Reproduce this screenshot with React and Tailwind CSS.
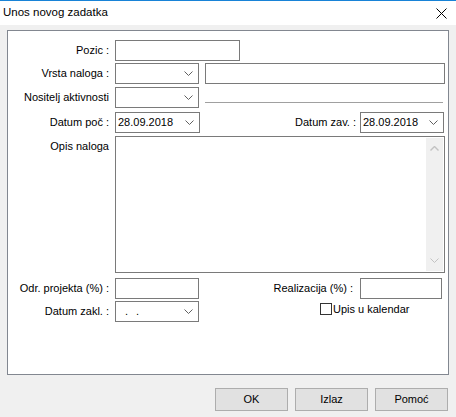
import React from "react";

function Chevron({ color = "#606060" }) {
  return (
    <svg width="9" height="5" viewBox="0 0 9 5" className="shrink-0">
      <path d="M0.5 0.5 L4.5 4.5 L8.5 0.5" fill="none" stroke={color} strokeWidth="1" />
    </svg>
  );
}

function Label({ children, className = "" }) {
  return <div className={`w-[101px] shrink-0 text-right ${className}`}>{children}</div>;
}

function Input({ w, className = "" }) {
  return <div className={`h-[21px] border border-[#7a7a7a] bg-white shrink-0 ${w} ${className}`} />;
}

function Combo({ value, w = "w-[84px]", className = "", children }) {
  return (
    <div className={`h-[21px] ${w} border border-[#7a7a7a] bg-white shrink-0 flex items-center justify-between pl-[2px] pr-[5px] ${className}`}>
      <span className="whitespace-pre">{children ?? value}</span>
      <Chevron />
    </div>
  );
}

export default function App() {
  return (
    <div className="w-[456px] h-[417px] bg-[#f0f0f0] overflow-hidden text-[11px] leading-none text-black font-['Liberation_Sans',Arial,sans-serif]">
      {/* title bar */}
      <div className="h-[25px] bg-white border-t border-[#1883d7] flex items-center justify-between pl-[3px] pr-[9px]">
        <span className="text-[11.5px]">Unos novog zadatka</span>
        <svg width="11" height="11" viewBox="0 0 11 11">
          <path d="M0.5 0.5 L10.5 10.5 M10.5 0.5 L0.5 10.5" stroke="#000" strokeWidth="1" />
        </svg>
      </div>

      {/* form panel */}
      <div className="mx-[7px] mt-[5px] h-[345px] bg-white border border-[#828790] flex flex-col">
        <div className="mt-[9px] flex items-center">
          <Label>Pozic :</Label>
          <Input w="w-[125px]" className="ml-[6px]" />
        </div>

        <div className="mt-[2px] flex items-center">
          <Label>Vrsta naloga :</Label>
          <Combo className="ml-[6px]" value="" />
          <Input w="w-[240px]" className="ml-[6px]" />
        </div>

        <div className="mt-[3px] flex items-center">
          <Label>Nositelj aktivnosti</Label>
          <Combo className="ml-[6px]" value="" />
          <div className="ml-[6px] w-[238px] mt-[10px] border-t border-[#a0a0a0]" />
        </div>

        <div className="mt-[4px] flex items-center">
          <Label>Datum poč :</Label>
          <Combo className="ml-[6px]" w="w-[85px]" value="28.09.2018" />
          <div className="flex-1" />
          <span>Datum zav. :</span>
          <Combo className="ml-[4px] mr-[4px]" value="28.09.2018" />
        </div>

        <div className="mt-[3px] flex">
          <Label className="pt-[5px]">Opis naloga</Label>
          <div className="ml-[6px] w-[330px] h-[137px] border border-[#7a7a7a] bg-white flex justify-end p-px">
            <div className="w-[17px] bg-[#f0f0f0] flex flex-col items-center justify-between py-[8px]">
              <svg width="9" height="5" viewBox="0 0 9 5">
                <path d="M0.5 4.5 L4.5 0.5 L8.5 4.5" fill="none" stroke="#c2c2c2" strokeWidth="1.4" />
              </svg>
              <Chevron color="#c2c2c2" />
            </div>
          </div>
        </div>

        <div className="mt-[5px] flex items-center">
          <Label>Odr. projekta (%) :</Label>
          <Input w="w-[84px]" className="ml-[6px]" />
          <div className="flex-1" />
          <span>Realizacija (%) :</span>
          <Input w="w-[82px]" className="ml-[7px] mr-[6px]" />
        </div>

        <div className="mt-[2px] flex items-center">
          <Label>Datum zakl. :</Label>
          <Combo className="ml-[6px] pl-[9px]" value="">
            <span>.</span>
            <span className="ml-[8px]">.</span>
          </Combo>
          <div className="ml-[121px] mt-[-5px] flex items-center">
            <div className="w-[12px] h-[12px] border border-[#333] bg-white" />
            <span className="ml-[1px]">Upis u kalendar</span>
          </div>
        </div>
      </div>

      {/* buttons */}
      <div className="mt-[13px] flex justify-end gap-[7px] pr-[8px]">
        {["OK", "Izlaz", "Pomoć"].map((b) => (
          <div key={b} className="w-[73px] h-[23px] bg-[#e1e1e1] border border-[#adadad] flex items-center justify-center">
            {b}
          </div>
        ))}
      </div>
    </div>
  );
}
